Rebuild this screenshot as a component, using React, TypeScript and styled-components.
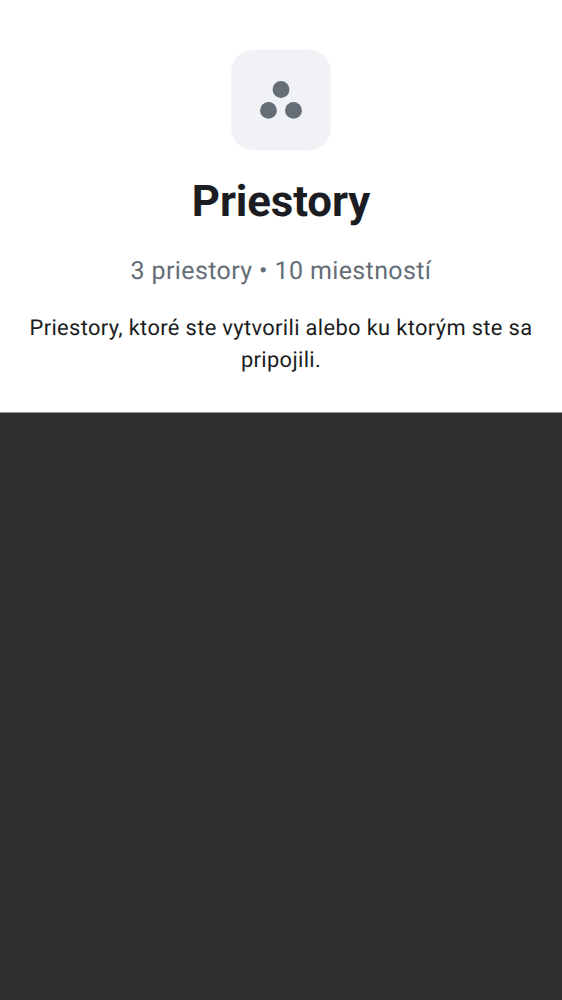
import React from "react";
import styled, { createGlobalStyle } from "styled-components";

const GlobalStyle = createGlobalStyle`
  *, *::before, *::after { box-sizing: border-box; }
  body { margin: 0; background: #303030; font-family: Roboto, sans-serif; text-rendering: geometricPrecision; }
`;

const Screen = styled.div`
  display: flex;
  flex-direction: column;
  min-height: 100vh;
  background: #303030;
`;

const Header = styled.header`
  display: flex;
  flex-direction: column;
  align-items: center;
  height: 413px;
  padding: 50px 25px 0;
  background: #ffffff;
  border-bottom: 1px solid #979797;
  text-align: center;
`;

const SpaceAvatar = styled.div`
  display: grid;
  place-items: center;
  width: 100px;
  height: 100px;
  border-radius: 22px;
  background: #f0f2f5;
`;

const Title = styled.h1`
  margin: 25px 0 0;
  font-size: 43.75px;
  line-height: 52px;
  font-weight: 700;
  letter-spacing: -0.1px;
  color: #1b1d22;
`;

const Summary = styled.p`
  margin: 30px 0 0;
  font-size: 25px;
  line-height: 30px;
  letter-spacing: 0.38px;
  color: #656d77;
`;

const Description = styled.p`
  margin: 25.5px 0 0;
  font-size: 21.875px;
  line-height: 32px;
  letter-spacing: 0.35px;
  color: #1b1d22;
`;

export default function App() {
  return (
    <Screen>
      <GlobalStyle />
      <Header>
        <SpaceAvatar>
          <svg width="100" height="100" viewBox="0 0 100 100" fill="#656d77" aria-hidden="true">
            <circle cx="50" cy="39.5" r="8.4" />
            <circle cx="37.5" cy="60.4" r="8.4" />
            <circle cx="62.5" cy="60.4" r="8.4" />
          </svg>
        </SpaceAvatar>
        <Title>Priestory</Title>
        <Summary>3 priestory • 10 miestností</Summary>
        <Description>Priestory, ktoré ste vytvorili alebo ku ktorým ste sa pripojili.</Description>
      </Header>
    </Screen>
  );
}
